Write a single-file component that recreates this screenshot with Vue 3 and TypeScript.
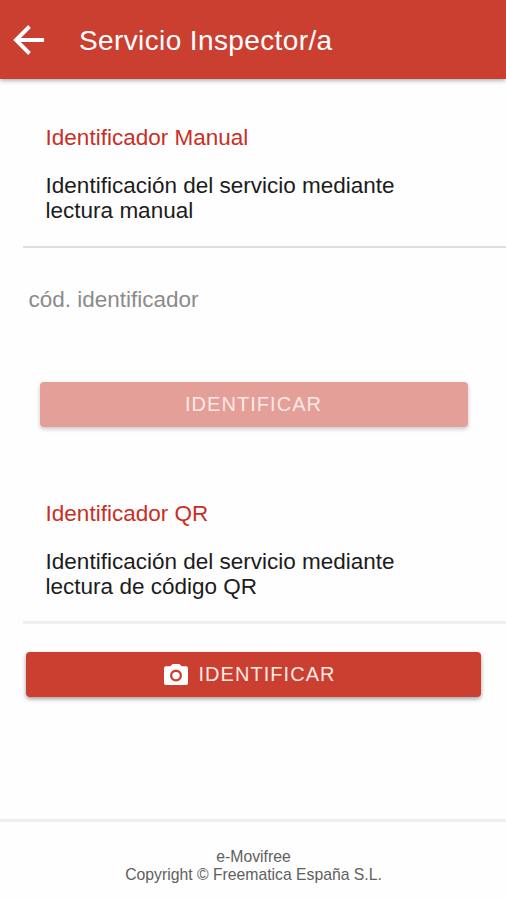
<script setup lang="ts">
import { ref } from 'vue'

const code = ref('')
</script>

<template>
  <div class="page">
    <header class="toolbar">
      <button class="back" type="button" aria-label="Volver">
        <svg viewBox="0 0 32 32" width="32" height="32">
          <path d="M31 16H3M16.500 2.500L3 16l13.500 13.500" fill="none" stroke="#fff" stroke-width="3.900" />
        </svg>
      </button>
      <h1>Servicio Inspector/a</h1>
    </header>

    <main class="content">
      <section class="intro">
        <h2>Identificador Manual</h2>
        <p>Identificación del servicio mediante lectura manual</p>
      </section>
      <input v-model="code" class="code" type="text" placeholder="cód. identificador" />
      <button class="action action-manual" type="button" :disabled="!code">IDENTIFICAR</button>

      <section class="intro intro-qr">
        <h2>Identificador QR</h2>
        <p>Identificación del servicio mediante lectura de código QR</p>
      </section>
      <button class="action action-qr" type="button">
        <svg viewBox="0 0 24 21" width="24" height="21">
          <path
            fill="#fff"
            fill-rule="evenodd"
            d="M8.500 0h7l2 2.300H22a2 2 0 0 1 2 2V19a2 2 0 0 1-2 2H2a2 2 0 0 1-2-2V4.300a2 2 0 0 1 2-2h4.500zM12 5.600a6 6 0 1 0 0 12 6 6 0 0 0 0-12z"
          />
          <circle cx="12" cy="11.600" r="3.700" fill="#fff" />
        </svg>
        <span>IDENTIFICAR</span>
      </button>
    </main>

    <footer class="footer">
      <div>e-Movifree</div>
      <div>Copyright © Freematica España S.L.</div>
    </footer>
  </div>
</template>

<style>
body {
  margin: 0;
  background: #fff;
}
</style>

<style scoped>
.page {
  display: flex;
  flex-direction: column;
  height: 900px;
  overflow: hidden;
  background: #fefefe;
  font-family: 'Liberation Sans', Arial, sans-serif;
  color: #1c1c1c;
}
.toolbar {
  display: flex;
  align-items: center;
  box-sizing: border-box;
  height: 79px;
  flex: none;
  padding: 1px 13px 0;
  background: #cb3f31;
  box-shadow: 0 1px 5px rgba(0, 0, 0, 0.4);
}
.back {
  display: flex;
  margin: 0;
  padding: 0;
  border: 0;
  background: none;
}
h1 {
  margin: 1px 0 0 34px;
  font-size: 28px;
  font-weight: 400;
  line-height: 34px;
  letter-spacing: 0.38px;
  color: #fff;
}
.content {
  display: flex;
  flex-direction: column;
  flex: 1;
}
.intro {
  box-sizing: border-box;
  height: 125px;
  margin: 44px 0 0 23px;
  padding: 2px 89px 0 22.6px;
  border-bottom: 2px solid #dedede;
}
.intro-qr {
  height: 126px;
  margin-top: 71px;
  padding-top: 3px;
  border-bottom: 3px solid #efefef;
}
h2 {
  margin: 0;
  font-size: 22.5px;
  font-weight: 400;
  line-height: 26px;
  color: #c92e26;
}
p {
  margin: 21.5px 0 0;
  font-size: 22.5px;
  line-height: 25.5px;
}
.code {
  box-sizing: border-box;
  width: 460px;
  height: 50px;
  margin: 27px 0 0 28.5px;
  padding: 0;
  border: 0;
  outline: 0;
  background: none;
  font: 22.5px 'Liberation Sans', Arial, sans-serif;
  color: #1c1c1c;
}
.code::placeholder {
  color: #8b8b8b;
  opacity: 1;
}
.action {
  display: flex;
  align-items: center;
  justify-content: center;
  gap: 10px;
  box-sizing: border-box;
  height: 45px;
  padding: 0;
  border: 0;
  border-radius: 4px;
  background: #cb3f31;
  box-shadow: 0 2px 4px rgba(0, 0, 0, 0.38);
  font: 20px 'Liberation Sans', Arial, sans-serif;
  letter-spacing: 1.05px;
  color: #fbe9e6;
}
.action-manual {
  width: 428px;
  margin: 57px 0 0 39.5px;
}
.action-manual:disabled {
  background: #e49f98;
  box-shadow: 0 2px 4px rgba(0, 0, 0, 0.22);
}
.action-qr {
  width: 455px;
  margin: 28px 0 0 26px;
  padding-right: 7px;
}
.footer {
  box-sizing: border-box;
  height: 81px;
  flex: none;
  padding: 26px 0 0 1px;
  border-top: 3px solid #f0f0f0;
  font-size: 15.75px;
  line-height: 18px;
  text-align: center;
  color: #606060;
}
</style>
